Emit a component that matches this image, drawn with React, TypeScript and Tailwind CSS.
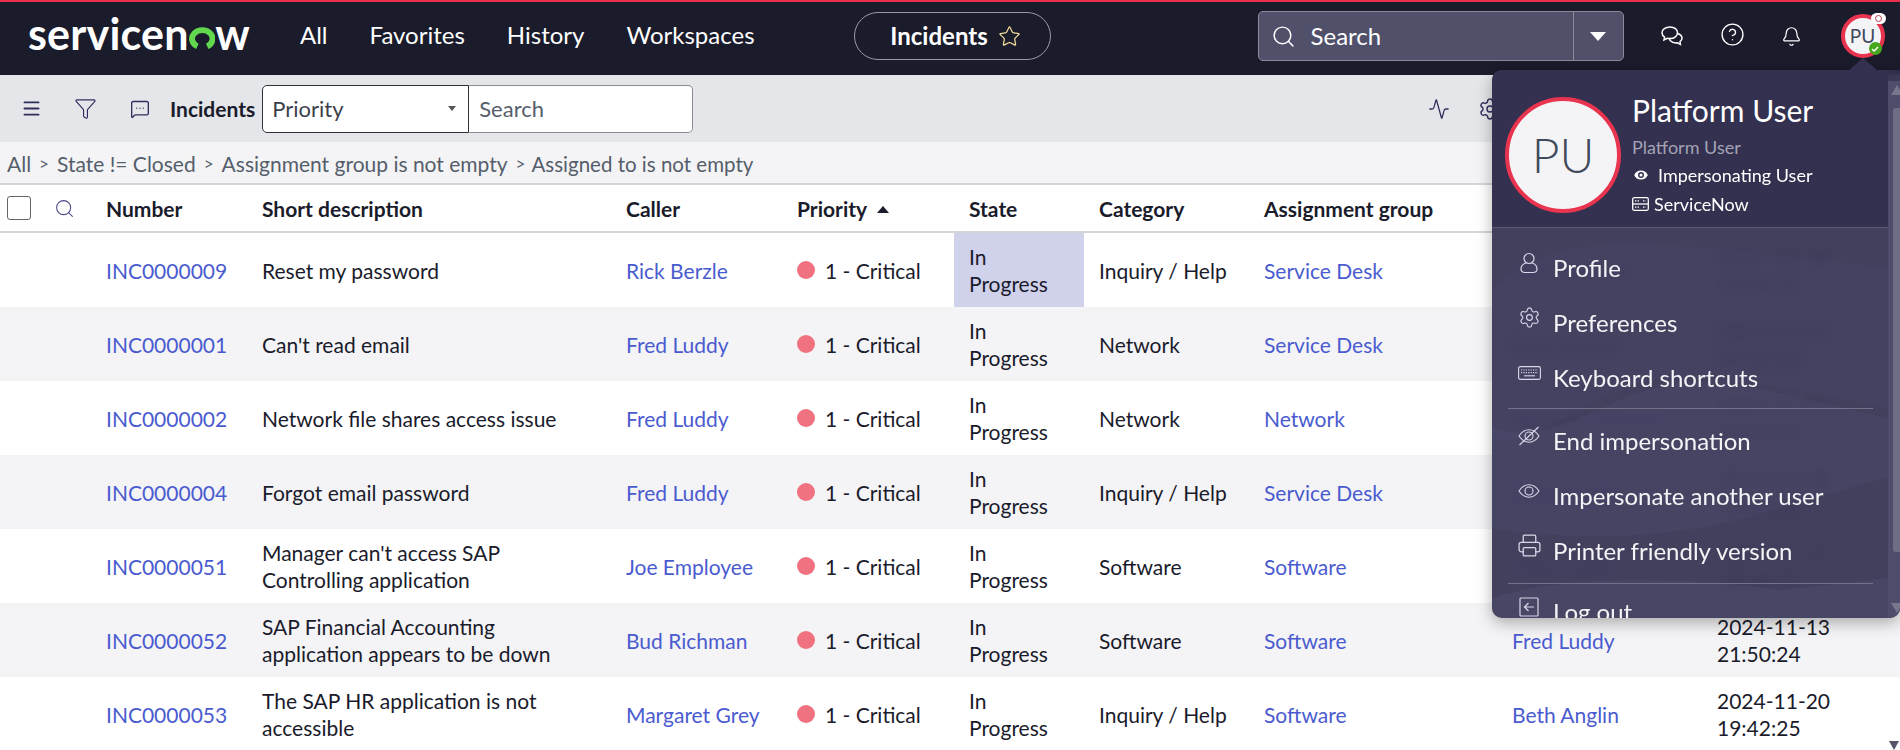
import React from "react";
import {
  Activity,
  Bell,
  CircleHelp,
  Eye,
  Funnel,
  Menu,
  MessageSquareMore,
  Printer,
  Search,
  Settings,
  Star,
} from "lucide-react";

interface Incident {
  number: string;
  description: string;
  caller: string;
  category: string;
  group: string;
  assignedTo: string;
  updated: string;
}

const incidents: Incident[] = [
  { number: "INC0000009", description: "Reset my password", caller: "Rick Berzle", category: "Inquiry / Help", group: "Service Desk", assignedTo: "Bud Richman", updated: "2024-10-28 16:24:11" },
  { number: "INC0000001", description: "Can't read email", caller: "Fred Luddy", category: "Network", group: "Service Desk", assignedTo: "Beth Anglin", updated: "2024-11-02 09:12:40" },
  { number: "INC0000002", description: "Network file shares access issue", caller: "Fred Luddy", category: "Network", group: "Network", assignedTo: "Howard Johnson", updated: "2024-11-05 13:37:02" },
  { number: "INC0000004", description: "Forgot email password", caller: "Fred Luddy", category: "Inquiry / Help", group: "Service Desk", assignedTo: "Beth Anglin", updated: "2024-11-08 11:05:56" },
  { number: "INC0000051", description: "Manager can't access SAP Controlling application", caller: "Joe Employee", category: "Software", group: "Software", assignedTo: "Fred Luddy", updated: "2024-11-11 18:44:19" },
  { number: "INC0000052", description: "SAP Financial Accounting application appears to be down", caller: "Bud Richman", category: "Software", group: "Software", assignedTo: "Fred Luddy", updated: "2024-11-13 21:50:24" },
  { number: "INC0000053", description: "The SAP HR application is not accessible", caller: "Margaret Grey", category: "Inquiry / Help", group: "Software", assignedTo: "Beth Anglin", updated: "2024-11-20 19:42:25" },
];

const gridCols =
  "grid grid-cols-[91px_156px_364px_171px_172px_130px_165px_248px_205px_187px]";

const Cell: React.FC<{ className?: string; children?: React.ReactNode }> = ({
  className = "",
  children,
}) => <div className={`flex items-center px-[15px] ${className}`}>{children}</div>;

const ProfileIcon = () => (
  <svg width="18" height="22" viewBox="0 0 18 22" fill="none" stroke="currentColor" strokeWidth="1.2">
    <circle cx="9" cy="6.5" r="5" />
    <path d="M6 11 C2.5 12 1 14.5 1 17 C1 19.5 3 20.5 5 20.5 H13 C15 20.5 17 19.5 17 17 C17 14.5 15.5 12 12 11" />
  </svg>
);

const LogoutIcon = () => (
  <svg width="20" height="20" viewBox="0 0 20 20" fill="none" stroke="currentColor" strokeWidth="1.2">
    <rect x="1" y="1" width="18" height="18" rx="1" />
    <path d="M15 10 H5.5 M9.5 6 L5.5 10 L9.5 14" />
  </svg>
);

const ChatIcon = () => (
  <svg width="24" height="24" viewBox="0 0 24 24" fill="none" stroke="currentColor" strokeWidth="1.5">
    <path d="M10 3 C5.5 3 2 5.6 2 8.8 C2 10.6 3 12.1 4.6 13.2 L4 16 L7.4 14.3 C8.2 14.5 9.1 14.6 10 14.6 C14.5 14.6 17.5 12 17.5 8.8 C17.5 5.6 14.5 3 10 3 Z" />
    <path d="M17.3 9.5 C20 10.2 22 12 22 14.2 C22 15.6 21.2 16.8 20 17.6 L20.4 20.4 L17.4 18.8 C14.8 19.2 12 18.4 10.4 16.8 C10 16.3 9.6 15.6 9.5 14.6" />
  </svg>
);

const ServerIcon = () => (
  <svg width="17" height="14" viewBox="0 0 17 14" fill="none" stroke="currentColor" strokeWidth="1.3">
    <rect x="0.7" y="0.7" width="15.6" height="12.6" rx="1.5" />
    <path d="M0.7 7 H16.3" />
    <path d="M3 3.9 H8 M3 10.1 H8 M11 3.9 H14 M11 10.1 H14" strokeDasharray="1.4 1.2" />
  </svg>
);

const KeyboardIcon = () => (
  <svg width="23" height="14" viewBox="0 0 23 14" fill="none" stroke="currentColor" strokeWidth="1.1">
    <rect x="0.6" y="0.6" width="21.8" height="12.8" rx="1.6" />
    <path d="M3 4 H20 M3 6.6 H20" strokeDasharray="1.2 1.2" />
    <path d="M6 9.8 H17" />
  </svg>
);

const WideEye = ({ slashed = false }: { slashed?: boolean }) => (
  <svg width="22" height="20" viewBox="0 0 22 20" fill="none" stroke="currentColor" strokeWidth="1.1">
    <path d="M1 10 C4 5.5 7.5 3.8 11 3.8 C14.5 3.8 18 5.5 21 10 C18 14.5 14.5 16.2 11 16.2 C7.5 16.2 4 14.5 1 10 Z" />
    <circle cx="11" cy="10" r="4" />
    {slashed && <path d="M1.5 19 L20.5 1" />}
  </svg>
);

const menuItems: { label: string; icon: React.ReactNode; divider?: string }[] = [
  { label: "Profile", icon: <ProfileIcon /> },
  { label: "Preferences", icon: <Settings size={23} strokeWidth={1.2} /> },
  { label: "Keyboard shortcuts", icon: <KeyboardIcon />, divider: "mt-[3px] mb-[4px]" },
  { label: "End impersonation", icon: <WideEye slashed /> },
  { label: "Impersonate another user", icon: <WideEye /> },
  { label: "Printer friendly version", icon: <Printer size={25} strokeWidth={1.2} />, divider: "mt-[5px]" },
  { label: "Log out", icon: <LogoutIcon /> },
];

const UserPopover = () => (
  <div className="absolute left-[1492px] top-[70px] z-20 flex h-[548px] w-[408px] overflow-hidden rounded-l-[10px] rounded-br-[10px] bg-[#2f2d4b]/92 text-white shadow-[0_5px_16px_rgba(0,0,0,0.3)] backdrop-blur-[6px]">
    <div className="w-[396px]">
      <div className="flex h-[158px] border-b border-[#5b5a75] bg-[#33314f] pl-[13px] pt-[27px]">
        <div className="flex h-[116px] w-[116px] items-center justify-center rounded-full border-[4px] border-[#e8344e] bg-[#f4f4f6] text-[48px] font-light text-[#3f4a5c]">
          PU
        </div>
        <div className="ml-[11px] -mt-[6px]">
          <div className="text-[30px] leading-[38px]">Platform User</div>
          <div className="mt-[6px] text-[18px] leading-[24px] text-[#a4a3b5]">Platform User</div>
          <div className="mt-[4px] flex items-center text-[18px] leading-[24px]">
            <Eye size={18} fill="white" stroke="#33314f" strokeWidth={2} />
            <span className="ml-[8px]">Impersonating User</span>
          </div>
          <div className="mt-[5px] flex items-center text-[18px] leading-[24px]">
            <ServerIcon />
            <span className="ml-[5px]">ServiceNow</span>
          </div>
        </div>
      </div>
      <div className="relative h-[390px] bg-[#484663]/40">
        <svg className="absolute inset-0" width="396" height="390" viewBox="0 0 396 390" fill="#8483b5">
          <path opacity="0.04" d="M0 60 C70 0 140 10 396 40 V180 C300 160 240 150 170 150 C100 160 50 220 0 210 Z" />
          <path opacity="0.08" d="M0 200 C60 220 110 170 180 155 C250 150 320 175 396 190 V250 C300 270 200 330 0 300 Z" />
          <path opacity="0.1" d="M0 370 C80 345 200 350 290 362 L396 350 V390 H0 Z" />
        </svg>
        <div className="relative pt-[12px]">
          {menuItems.map((item) => (
            <div key={item.label}>
              <div className="flex h-[55px] items-center pl-[61px]">
                <div className="absolute left-[20px] flex w-[34px] -translate-y-[5px] justify-center text-[#d9d8ea]">
                  {item.icon}
                </div>
                <span className="text-[24px] text-[#f4f4f6]">{item.label}</span>
              </div>
              {item.divider && <div className={`ml-[16px] mr-[15px] h-px bg-[#73728b] ${item.divider}`} />}
            </div>
          ))}
        </div>
      </div>
    </div>
    <div className="relative mt-[11px] w-[12px] bg-[#4f4d6c]">
      <div className="absolute left-[3px] top-[4px] h-0 w-0 border-x-[6px] border-b-[10px] border-x-transparent border-b-[#77768b]" />
      <div className="absolute left-[5px] top-[27px] h-[444px] w-[7px] rounded-l-[3px] bg-[#6e6d84]" />
      <div className="absolute bottom-[5px] left-[3px] h-0 w-0 border-x-[6px] border-t-[10px] border-x-transparent border-t-[#77768b]" />
    </div>
  </div>
);

const App: React.FC = () => {
  return (
    <div className="relative flex h-[750px] w-[1900px] flex-col overflow-hidden bg-[#f4f4f6] font-['Lato',sans-serif] text-[21px] text-[#1a1b2b]">
      {/* top nav */}
      <header className="flex h-[75px] shrink-0 items-center border-t-2 border-[#e8304e] bg-[#1a1b2b] pb-[5px] text-white">
        <div className="ml-[28px] flex w-[222px] items-center pb-[6px] text-[43px] font-bold leading-none tracking-[0.2px]">
          <span>servicen</span>
          <svg className="mt-[9px]" width="27" height="24" viewBox="0 0 27 24" fill="none" stroke="#62d84e" strokeWidth="6">
            <path d="M8.5 20.5 A10.4 8.8 0 1 1 18.5 20.5" />
          </svg>
          <span>w</span>
        </div>
        <nav className="ml-[50px] -mt-[3px] flex gap-[42px] text-[24px]">
          <span>All</span>
          <span>Favorites</span>
          <span>History</span>
          <span>Workspaces</span>
        </nav>
        <div className="ml-[99px] flex h-[48px] w-[197px] items-center justify-center gap-[10px] rounded-full border border-[#9a9aa6] pl-[7px] text-[24px] font-bold">
          Incidents
          <Star size={23} strokeWidth={1.3} className="text-[#f2dc9b]" />
        </div>
        <div className="ml-[207px] flex h-[50px] w-[366px] items-center rounded-[5px] border border-[#8a8a9a] bg-[#50506a]">
          <Search size={25} strokeWidth={1.4} className="ml-[12px]" />
          <span className="ml-[15px] flex-1 text-[24px]">Search</span>
          <div className="flex h-full w-[50px] items-center justify-center border-l border-[#8a8a9a]">
            <div className="h-0 w-0 border-x-[8px] border-t-[9px] border-x-transparent border-t-white" />
          </div>
        </div>
        <div className="ml-[36px] flex items-center gap-[36px]">
          <ChatIcon />
          <CircleHelp size={25} strokeWidth={1.3} className="-mt-[3px]" />
          <Bell size={21} strokeWidth={1.4} />
        </div>
        <div className="relative ml-[39px] flex h-[44px] w-[44px] items-center justify-center rounded-full border-[4px] border-[#e8344e] bg-[#f4f4f6] text-[19px] text-[#3f4a5c]">
          PU
          <div className="absolute -right-[5px] -top-[5px] flex h-[11px] w-[15px] items-center justify-center rounded-full bg-white">
            <div className="h-[7px] w-[7px] rounded-full border-[1.5px] border-[#b8394e]" />
          </div>
          <div className="absolute -bottom-[1px] -right-[1px] flex h-[13px] w-[13px] items-center justify-center rounded-full bg-[#46a71c]">
            <svg width="8" height="8" viewBox="0 0 8 8" fill="none" stroke="white" strokeWidth="1.5">
              <path d="M1 4.2 L3.2 6 L7 2" />
            </svg>
          </div>
        </div>
      </header>
      <div className="absolute left-[1848px] top-[58px] z-30 h-0 w-0 border-x-[15px] border-b-[13px] border-x-transparent border-b-[#33314f]" />

      {/* list toolbar */}
      <div className="flex h-[67px] shrink-0 items-center bg-[#e4e6ea] text-[#2f2f5f]">
        <Menu size={21} strokeWidth={2.2} className="ml-[21px]" />
        <Funnel size={23} strokeWidth={1.2} className="ml-[32px]" />
        <MessageSquareMore size={20} strokeWidth={1.6} className="ml-[33px]" />
        <span className="ml-[20px] text-[21px] font-bold text-[#1a1b2b]">Incidents</span>
        <div className="relative ml-[7px] flex h-[48px] w-[207px] items-center rounded-l-[5px] border border-[#30303a] bg-white pl-[9px] text-[22px] text-[#3c3f4a]">
          Priority
          <div className="absolute right-[12px] top-[20px] h-0 w-0 border-x-[4px] border-t-[5px] border-x-transparent border-t-[#555]" />
        </div>
        <div className="flex h-[48px] w-[224px] items-center rounded-r-[5px] border border-l-0 border-[#8a8c94] bg-white pl-[10px] text-[22px] text-[#555e6b]">
          Search
        </div>
        <Activity size={22} strokeWidth={1.4} className="ml-[735px]" />
        <Settings size={24} strokeWidth={1.4} className="ml-[28px]" />
      </div>

      {/* breadcrumb */}
      <div className="flex h-[43px] shrink-0 items-center gap-[8px] border-b-2 border-[#d5d5d8] pl-[7px] pt-[3px] text-[21px] text-[#555e6b]">
        <span>All</span>
        <span className="text-[17px]">&gt;</span>
        <span>State != Closed</span>
        <span className="text-[17px]">&gt;</span>
        <span>Assignment group is not empty</span>
        <span className="text-[17px]">&gt;</span>
        <span className="-ml-[2px] text-[20.5px]">Assigned to is not empty</span>
      </div>

      {/* table head */}
      <div className={`${gridCols} h-[48px] shrink-0 border-b-2 border-[#d5d5d8] bg-white pt-[2px] font-bold`}>
        <div className="-mt-[2px] flex items-center pl-[7px]">
          <div className="h-[24px] w-[24px] rounded-[3px] border border-[#666]" />
          <Search size={21} strokeWidth={1.2} className="ml-[23px] text-[#4a4a8a]" />
        </div>
        <Cell>Number</Cell>
        <Cell>Short description</Cell>
        <Cell>Caller</Cell>
        <Cell>
          Priority
          <div className="ml-[10px] h-0 w-0 border-x-[6px] border-b-[7px] border-x-transparent border-b-[#1a1b2b]" />
        </Cell>
        <Cell>State</Cell>
        <Cell>Category</Cell>
        <Cell>Assignment group</Cell>
        <Cell>Assigned to</Cell>
        <Cell>Updated</Cell>
      </div>

      {/* table rows */}
      <div className="min-h-0 flex-1">
        {incidents.map((row, i) => (
          <div
            key={row.number}
            className={`${gridCols} h-[74px] leading-[27px] ${i % 2 === 0 ? "bg-white" : "bg-[#f4f4f6]"}`}
          >
            <div />
            <Cell className="text-[#4a5bd0]">{row.number}</Cell>
            <Cell>{row.description}</Cell>
            <Cell className="text-[#4a5bd0]">{row.caller}</Cell>
            <Cell>
              <div className="mr-[10px] h-[18px] w-[18px] rounded-full bg-[#f0717f]" />
              1 - Critical
            </Cell>
            <Cell className={i === 0 ? "bg-[#d0d2ec]" : ""}>In Progress</Cell>
            <Cell>{row.category}</Cell>
            <Cell className="text-[#4a5bd0]">{row.group}</Cell>
            <Cell className="text-[#4a5bd0]">{row.assignedTo}</Cell>
            <Cell>
              <span className="whitespace-pre-line">{row.updated.replace(" ", "\n")}</span>
            </Cell>
          </div>
        ))}
      </div>

      {/* page scrollbar */}
      <div className="absolute bottom-0 right-[1px] h-0 w-0 border-x-[5px] border-t-[9px] border-x-transparent border-t-[#55556a]" />

      <UserPopover />
    </div>
  );
};

export default App;
